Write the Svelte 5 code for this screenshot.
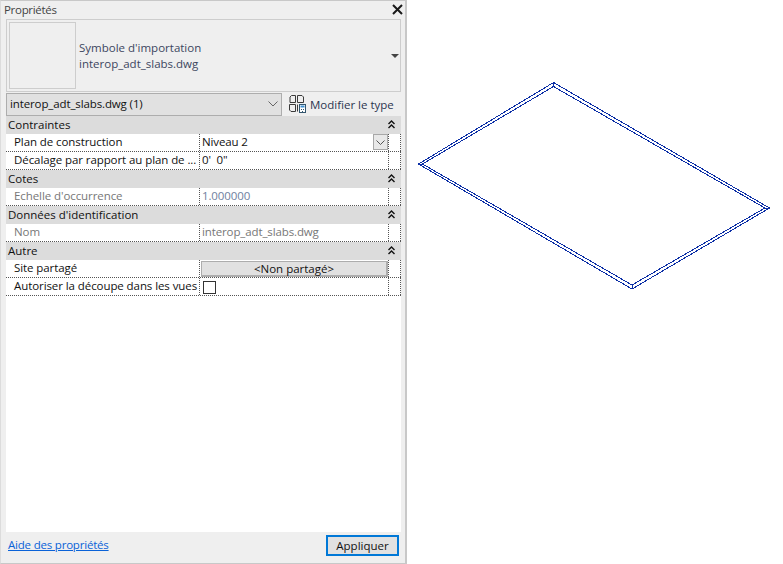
<script>
  const sections = [
    { title: 'Contraintes', rows: [
      { label: 'Plan de construction', value: 'Niveau 2', kind: 'select' },
      { label: 'Décalage par rapport au plan de ...', value: "0'  0\"" }
    ]},
    { title: 'Cotes', rows: [
      { label: "Echelle d'occurrence", value: '1.000000', off: true, tint: true }
    ]},
    { title: "Données d'identification", rows: [
      { label: 'Nom', value: 'interop_adt_slabs.dwg', off: true }
    ]},
    { title: 'Autre', rows: [
      { label: 'Site partagé', value: '<Non partagé>', kind: 'button' },
      { label: 'Autoriser la découpe dans les vues', kind: 'check' }
    ]}
  ];
</script>

<div class="screen">
  <aside class="panel">
    <header class="titlebar">
      <span>Propriétés</span>
      <svg class="close" width="11" height="11" viewBox="0 0 11 11">
        <path d="M1 1l9 9M10 1l-9 9" stroke="#1a1a1a" stroke-width="2" fill="none" />
      </svg>
    </header>

    <div class="preview">
      <div class="thumb"></div>
      <div class="preview-text">
        <div>Symbole d'importation</div>
        <div>interop_adt_slabs.dwg</div>
      </div>
      <svg class="preview-arrow" width="8" height="4" viewBox="0 0 8 4"><path d="M0 0h8L4 4z" fill="#444" /></svg>
    </div>

    <div class="toolbar">
      <div class="combo">
        <span>interop_adt_slabs.dwg (1)</span>
        <svg width="10" height="6" viewBox="0 0 10 6"><path d="M.5.5L5 5 9.500.5" stroke="#666" fill="none" /></svg>
      </div>
      <div class="type-btn">
        <svg width="17" height="18" viewBox="0 0 17 18" fill="none" stroke="#3b3b3b">
          <path d="M2.500.5h4v7h-5.500v-5.500zM8.500.5h4.500l1.500 1.500v5.500h-6zM.5 9.500h6v7h-4.500l-1.500-1.500zM8.500 9.500v7" />
          <rect x="10.500" y="9.500" width="6" height="8" fill="#fff" stroke="#33566e" />
          <rect x="11.500" y="10.500" width="4" height="2" fill="#3f8fd0" stroke="none" />
          <path d="M12 14.500h1M14 14.500h1M13 16.500h1" stroke="#33566e" />
        </svg>
        <span>Modifier le type</span>
      </div>
    </div>

    <div class="grid">
      {#each sections as section}
        <div class="section">
          <span>{section.title}</span>
          <svg width="7" height="9" viewBox="0 0 7 9" fill="none" stroke="#111" stroke-width="1.400">
            <path d="M.5 4l3-3 3 3M.5 8l3-3 3 3" />
          </svg>
        </div>
        {#each section.rows as row}
          <div class="row">
            <div class="label" class:off={row.off}>{row.label}</div>
            <div class="value" class:off={row.off} class:tint={row.tint}>
              {#if row.kind === 'button'}
                <div class="share-btn">{row.value}</div>
              {:else if row.kind === 'check'}
                <div class="check"></div>
              {:else}
                <span class="val-text">{row.value}</span>
              {/if}
              {#if row.kind === 'select'}
                <div class="drop">
                  <svg width="9" height="5" viewBox="0 0 9 5"><path d="M.5.500L4.500 4.500 8.500.5" stroke="#555" fill="none" /></svg>
                </div>
              {/if}
            </div>
            <div class="spare"></div>
          </div>
        {/each}
      {/each}
    </div>

    <footer class="foot">
      <span class="help">Aide des propriétés</span>
      <div class="apply">Appliquer</div>
    </footer>
  </aside>

  <main class="canvas">
    <svg width="376" height="564" viewBox="407 0 376 564" shape-rendering="crispEdges" fill="none" stroke="#0c2fa6">
      <path d="M553.500 82.500L418.500 164L632 289L769.500 208z" />
      <path d="M553.500 86.500L422.500 164L632 285L765 208z" />
      <path d="M553.500 82.500V86.500M418.500 164H422.500M632 285V289M765 208H769.500" />
    </svg>
  </main>
</div>

<style>
  :global(body) {
    margin: 0;
    background: #fff;
  }

  .screen {
    display: flex;
    width: 783px;
    height: 564px;
    font-family: "Open Sans", "Noto Sans", sans-serif;
    font-size: 11.5px;
    color: #111;
    overflow: hidden;
  }

  .panel {
    width: 408px;
    height: 564px;
    box-sizing: border-box;
    display: flex;
    flex-direction: column;
    background: #efefef;
    border-top: 1px solid #c8c8c8;
    border-right: 2px solid #c8c8c8;
    border-bottom: 1px solid #c8c8c8;
    border-left: 1px solid #dcdcdc;
  }

  .titlebar {
    height: 18px;
    flex: none;
    box-sizing: border-box;
    display: flex;
    align-items: center;
    justify-content: space-between;
    padding: 0 2px 2px 3px;
    color: #444;
    letter-spacing: -0.3px;
  }

  .preview {
    height: 73px;
    flex: none;
    box-sizing: border-box;
    margin: 0 4px 0 5px;
    display: flex;
    align-items: center;
    border: 1px solid #cdcdcd;
    padding: 0 1px 0 2px;
  }

  .thumb {
    width: 65px;
    height: 65px;
    flex: none;
    border: 1px solid #cdcdcd;
  }

  .preview-text {
    flex: 1;
    margin-left: 3px;
    line-height: 16px;
    color: #3c4660;
  }

  .toolbar {
    height: 24px;
    flex: none;
    display: flex;
    align-items: center;
    margin: 0 4px 0 5px;
  }

  .combo {
    width: 276px;
    height: 23px;
    flex: none;
    box-sizing: border-box;
    display: flex;
    align-items: center;
    justify-content: space-between;
    padding: 0 3px 1px 3px;
    background: #e1e1e1;
    border: 1px solid #adadad;
    letter-spacing: -0.12px;
  }

  .type-btn {
    display: flex;
    align-items: center;
    gap: 4px;
    margin-left: 7px;
    color: #2c3550;
  }

  .grid {
    flex: 1;
    margin: 0 4px 0 5px;
    background: #fff;
  }

  .section {
    height: 18px;
    box-sizing: border-box;
    display: flex;
    align-items: center;
    justify-content: space-between;
    padding: 0 6px 1px 2px;
    background: #dcdcdc;
  }

  .row {
    height: 18px;
    box-sizing: border-box;
    display: flex;
    border-bottom: 1px dotted #555;
  }

  .label {
    width: 193px;
    flex: none;
    box-sizing: border-box;
    padding-left: 8px;
    line-height: 16px;
    letter-spacing: -0.08px;
    white-space: nowrap;
    overflow: hidden;
  }

  .value {
    width: 190px;
    flex: none;
    box-sizing: border-box;
    display: flex;
    align-items: center;
    justify-content: space-between;
    padding-left: 2px;
    border-left: 1px dotted #555;
    border-right: 1px dotted #555;
  }

  .val-text {
    margin-bottom: 2px;
    letter-spacing: -0.12px;
    white-space: pre;
  }

  .spare {
    flex: 1;
    border-right: 1px dotted #555;
  }

  .off {
    color: #777;
  }

  .tint {
    color: #6f80a0;
  }

  .drop {
    width: 15px;
    height: 16px;
    align-self: flex-start;
    box-sizing: border-box;
    display: flex;
    align-items: center;
    justify-content: center;
    background: #e8e8e8;
    border: 1px solid #a8a8a8;
  }

  .share-btn {
    flex: 1;
    height: 16px;
    margin-left: -1px;
    box-sizing: border-box;
    text-align: center;
    line-height: 13px;
    background: #e1e1e1;
    border: 1px solid #adadad;
    border-right-width: 2px;
    border-bottom-width: 2px;
  }

  .check {
    width: 13px;
    height: 13px;
    margin: 1px 0 0 1px;
    box-sizing: border-box;
    border: 1px solid #333;
    background: #fff;
  }

  .foot {
    height: 31px;
    flex: none;
    box-sizing: border-box;
    display: flex;
    align-items: flex-start;
    justify-content: space-between;
    padding: 3px 6px 0 7px;
  }

  .help {
    margin-top: 2px;
    color: #0a62d8;
    text-decoration: underline;
    letter-spacing: -0.2px;
  }

  .apply {
    width: 73px;
    height: 21px;
    box-sizing: border-box;
    display: flex;
    align-items: center;
    justify-content: center;
    background: #e1e1e1;
    border: 2px solid #0078d7;
  }

  .canvas {
    flex: 1;
    background: #fff;
  }

  .canvas svg {
    display: block;
  }
</style>
